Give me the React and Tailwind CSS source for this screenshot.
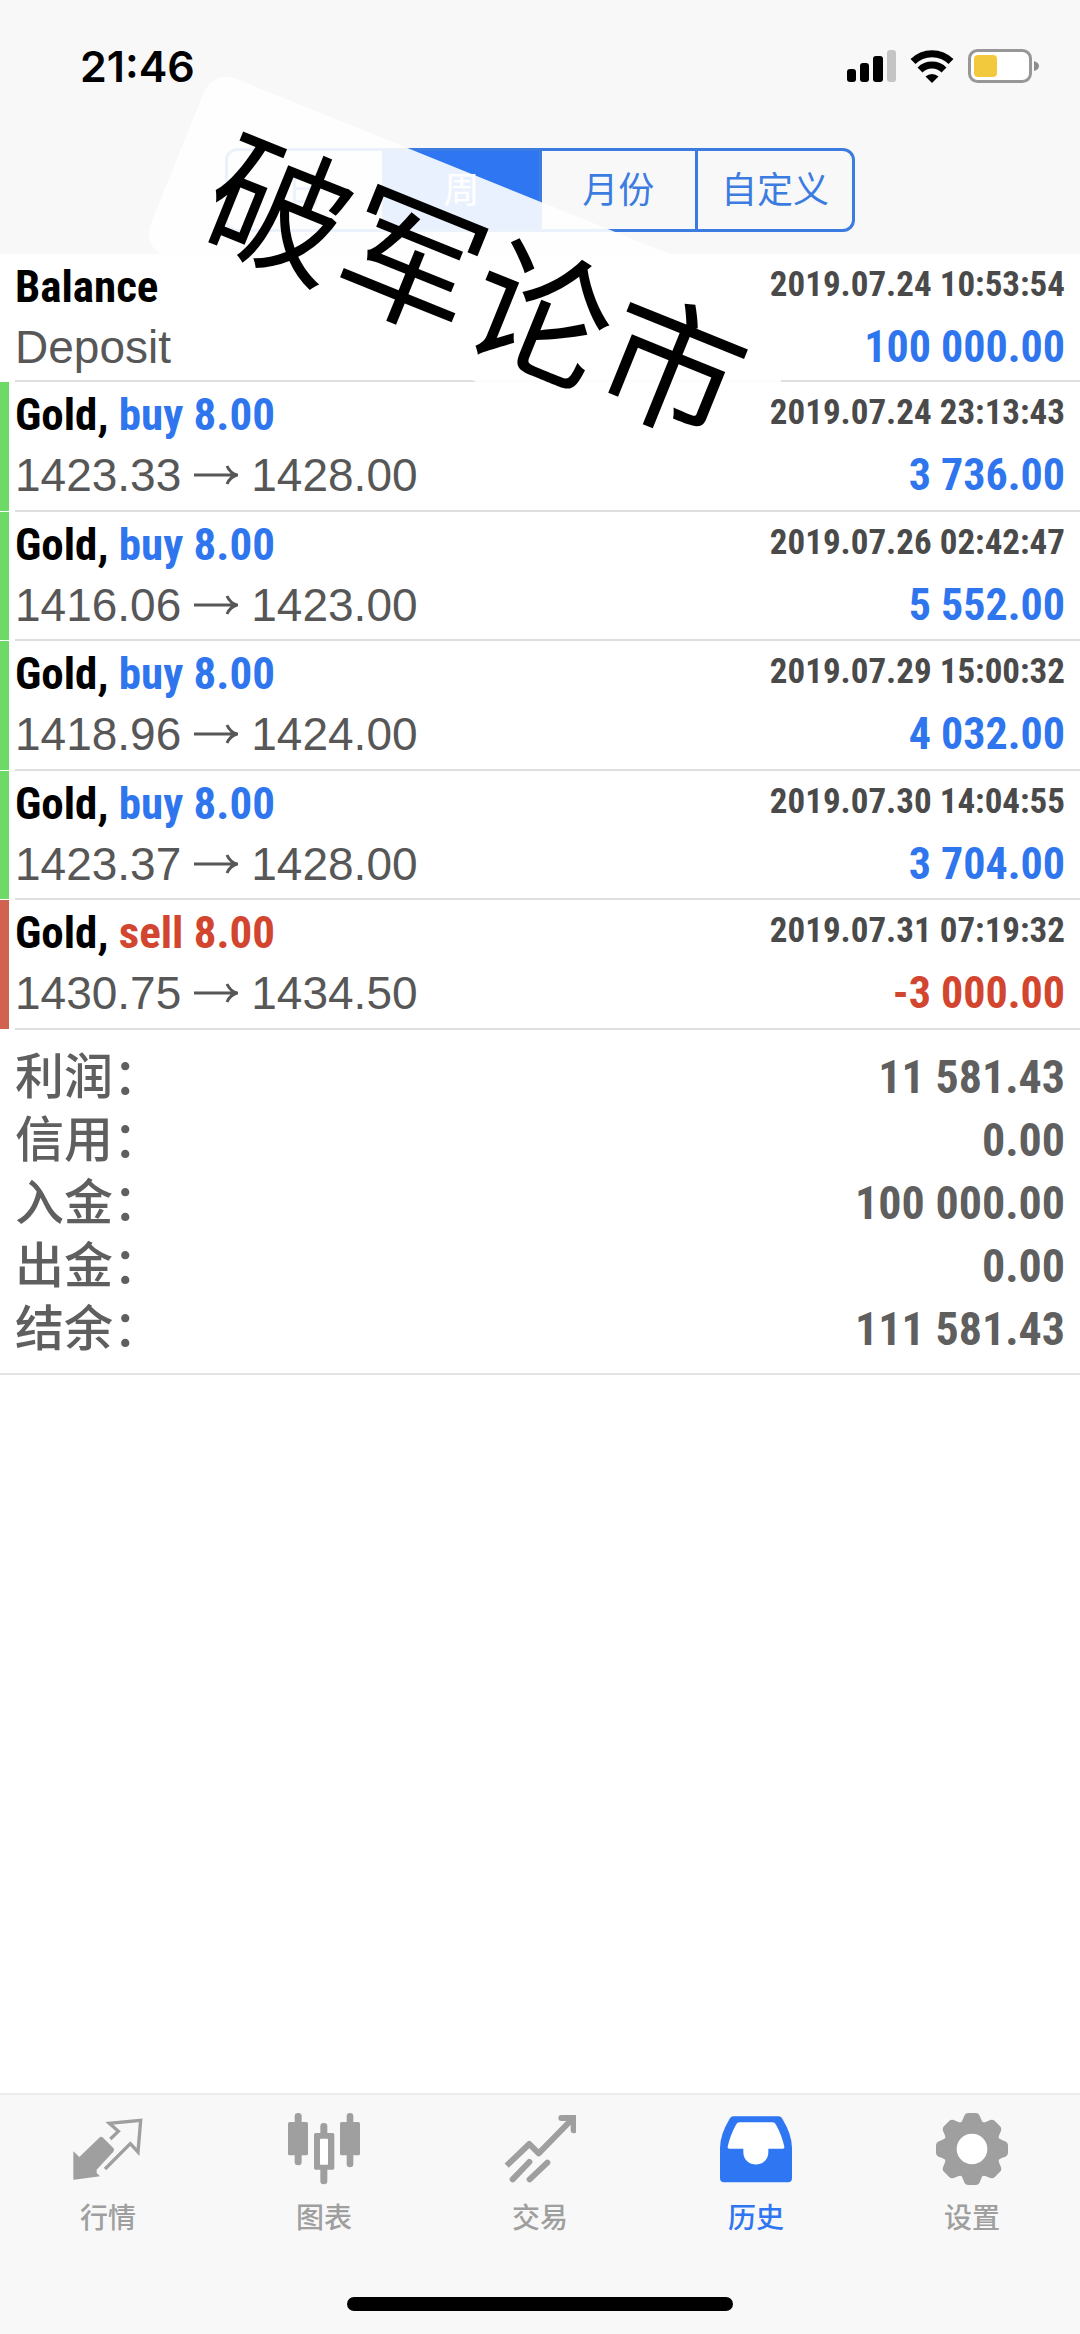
import React, { useState } from 'react';
import clsx from 'clsx';

const PERIODS = ['日', '周', '月份', '自定义'];

const DEALS = [
  { id: 1, side: 'buy', volume: '8.00', open: '1423.33', close: '1428.00', time: '2019.07.24 23:13:43', profit: '3 736.00' },
  { id: 2, side: 'buy', volume: '8.00', open: '1416.06', close: '1423.00', time: '2019.07.26 02:42:47', profit: '5 552.00' },
  { id: 3, side: 'buy', volume: '8.00', open: '1418.96', close: '1424.00', time: '2019.07.29 15:00:32', profit: '4 032.00' },
  { id: 4, side: 'buy', volume: '8.00', open: '1423.37', close: '1428.00', time: '2019.07.30 14:04:55', profit: '3 704.00' },
  { id: 5, side: 'sell', volume: '8.00', open: '1430.75', close: '1434.50', time: '2019.07.31 07:19:32', profit: '-3 000.00' },
];

const SUMMARY = [
  { label: '利润：', value: '11 581.43' },
  { label: '信用：', value: '0.00' },
  { label: '入金：', value: '100 000.00' },
  { label: '出金：', value: '0.00' },
  { label: '结余：', value: '111 581.43' },
];

const NARROW = "font-['Roboto_Condensed','Liberation_Sans_Narrow',sans-serif] font-bold";

function SignalIcon() {
  return (
    <svg width="49" height="32" viewBox="0 0 49 32" aria-hidden="true">
      <rect x="0" y="19" width="9" height="13" rx="3" />
      <rect x="13" y="13" width="9" height="19" rx="3" />
      <rect x="26" y="6" width="10" height="26" rx="3" />
      <rect x="40" y="0" width="9" height="32" rx="3" fill="#c4c4c4" />
    </svg>
  );
}

function WifiIcon() {
  return (
    <svg width="44" height="33" viewBox="0 0 44 33" aria-hidden="true">
      <path d="M3 11.500a27 27 0 0 1 38 0" fill="none" stroke="#000" strokeWidth="7" />
      <path d="M10 20a17 17 0 0 1 24 0" fill="none" stroke="#000" strokeWidth="7" />
      <path d="M15.500 26.500a9.500 9.500 0 0 1 13 0L22 33z" />
    </svg>
  );
}

function BatteryIcon() {
  return (
    <svg width="72" height="34" viewBox="0 0 72 34" aria-hidden="true">
      <rect x="1.500" y="1.500" width="61" height="31" rx="8" fill="#fff" stroke="#979797" strokeWidth="3" />
      <rect x="6" y="6" width="23" height="22" rx="4" fill="#f2c93d" />
      <path d="M66 12q5 1.500 5 5t-5 5z" fill="#8d8d8d" />
    </svg>
  );
}

function QuotesIcon() {
  return (
    <svg className="size-[72px]" viewBox="0 0 216 216" aria-hidden="true">
      <path
        d="M4 115 22 132 82 74q5-5 11 0l31 31q5 6 0 11L74 170v10l10 10L6 200q-2 0-2-3z"
        fill="currentColor"
      />
      <path d="M115 78 139 55 112 31 206 22 198 117 175 92 99 168" fill="none" stroke="currentColor" strokeWidth="10" />
    </svg>
  );
}

function ChartIcon() {
  return (
    <svg className="size-[72px]" viewBox="0 0 216 216" fill="currentColor" aria-hidden="true">
      <rect x="20" y="0" width="21" height="157" rx="10" />
      <rect x="0" y="27" width="60" height="100" rx="5" />
      <rect x="97" y="30" width="21" height="184" rx="10" />
      <rect x="78" y="60" width="61" height="110" rx="5" />
      <rect x="96" y="77" width="24" height="78" rx="2" fill="#fff" />
      <rect x="176" y="0" width="20" height="163" rx="10" />
      <rect x="156" y="27" width="60" height="100" rx="5" />
    </svg>
  );
}

function TradeIcon() {
  return (
    <svg
      className="size-[72px]"
      viewBox="0 0 216 216"
      fill="none"
      stroke="currentColor"
      strokeWidth="18"
      strokeLinecap="round"
      aria-hidden="true"
    >
      <path d="M8 158 76 93l28 28L205 18" strokeLinecap="butt" strokeLinejoin="round" />
      <path d="M172 15h37v37" />
      <path d="M26 199 76 147M77 199l53-50" />
    </svg>
  );
}

function HistoryIcon() {
  return (
    <svg className="size-[72px]" viewBox="0 0 216 216" aria-hidden="true">
      <path
        d="M40 10H176q7 0 11 7 29 48 29 88v91q0 12-12 12H12q-12 0-12-12v-91Q0 65 29 17q4-7 11-7z"
        fill="currentColor"
      />
      <path
        d="M59 28h98q8 0 11 7 17 30 25 66 1 6-5 6h-43v10c0 50-75 50-75 0v-10H28q-6 0-5-6 8-36 25-66 3-7 11-7z"
        fill="#fff"
      />
    </svg>
  );
}

function SettingsIcon() {
  return (
    <svg className="size-[72px]" viewBox="-108 -108 216 216" fill="currentColor" aria-hidden="true">
      <circle r="86" />
      {[0, 45, 90, 135, 180, 225, 270, 315].map((angle) => (
        <path key={angle} d="M-36-76Q-28-84-25-95-21-108-11-108H11Q21-108 25-95 28-84 36-76z" transform={`rotate(${angle})`} />
      ))}
      <circle r="46" fill="#fff" />
    </svg>
  );
}

const TABS = [
  { label: '行情', Icon: QuotesIcon },
  { label: '图表', Icon: ChartIcon },
  { label: '交易', Icon: TradeIcon },
  { label: '历史', Icon: HistoryIcon },
  { label: '设置', Icon: SettingsIcon },
];

function Arrow() {
  return (
    <svg className="mx-[13px]" width="44" height="20" viewBox="0 0 44 20" fill="none" stroke="currentColor" strokeWidth="3" role="img" aria-label="to">
      <path d="M0 10h42M33 1q3 7 10 9-7 2-10 9" />
    </svg>
  );
}

function HistoryRow({ bar, title, detail, time, amount, negative, className }) {
  return (
    <li className={clsx('flex', className)}>
      <div className={clsx('w-[9px] mr-[6px] border-b border-white', bar)} />
      <div className="flex flex-1 justify-between border-b-2 border-[#dedede] pt-[3px] pr-[15px]">
        <div>
          <h2 className={clsx(NARROW, 'text-[45px] leading-[60px] text-black')}>{title}</h2>
          <p className="flex items-center text-[46px] leading-[60px] text-[#575757]">{detail}</p>
        </div>
        <div className={clsx(NARROW, 'text-right')}>
          <p className="h-[60px] text-[35px] leading-[56px] text-[#4a4a4a]">{time}</p>
          <p className={clsx('text-[44px] leading-[60px]', negative ? 'text-[#d2452f]' : 'text-[#2f76ee]')}>{amount}</p>
        </div>
      </div>
    </li>
  );
}

export default function App() {
  const [period, setPeriod] = useState('周');
  const [tab, setTab] = useState('历史');

  return (
    <div className="relative flex min-h-screen flex-col overflow-hidden bg-white font-['Liberation_Sans','Noto_Sans_CJK_SC',sans-serif]">
      <header className="h-[254px] bg-[#f8f8f8]">
        <div className="flex h-[148px] items-start justify-between pt-[49px] pl-20 pr-10">
          <time className="font-['Inter',sans-serif] text-[43px] leading-[34px] font-semibold text-black">21:46</time>
          <div className="flex items-center gap-[14px]">
            <SignalIcon />
            <WifiIcon />
            <BatteryIcon />
          </div>
        </div>
        <div className="mx-auto flex h-[84px] w-[630px] overflow-hidden rounded-xl border-3 border-[#3c7ce0]">
          {PERIODS.map((name) => (
            <button
              key={name}
              type="button"
              aria-pressed={period === name}
              onClick={() => setPeriod(name)}
              className={clsx(
                'flex-1 border-r-3 border-[#3c7ce0] pt-[2px] text-[36px] last:border-r-0',
                period === name ? 'bg-[#2f76f2] text-white' : 'text-[#3c7ce0]'
              )}
            >
              {name}
            </button>
          ))}
        </div>
      </header>

      <main className="flex-1">
        <ul>
          <HistoryRow
            className="h-[128px]"
            title="Balance"
            detail="Deposit"
            time="2019.07.24 10:53:54"
            amount="100 000.00"
          />
          {DEALS.map((deal) => (
            <HistoryRow
              key={deal.id}
              className="h-[129px] even:h-[130px]"
              bar={deal.side === 'sell' ? 'bg-[#d0624f]' : 'bg-[#6fd968]'}
              title={
                <>
                  Gold,{' '}
                  <span className={deal.side === 'sell' ? 'text-[#d2452f]' : 'text-[#2f76ee]'}>
                    {deal.side} {deal.volume}
                  </span>
                </>
              }
              detail={
                <>
                  {deal.open}
                  <Arrow />
                  {deal.close}
                </>
              }
              time={deal.time}
              amount={deal.profit}
              negative={deal.side === 'sell'}
            />
          ))}
        </ul>

        <dl className="border-b-2 border-[#e4e4e4] py-[14px] px-[15px] text-[#5f5f5f]">
          {SUMMARY.map((item) => (
            <div key={item.label} className="flex h-[63px] justify-between">
              <dt className="font-['Noto_Sans_CJK_SC',sans-serif] text-[49px] leading-[58px] font-medium">{item.label}</dt>
              <dd className={clsx(NARROW, 'text-[46px] leading-[66px]')}>{item.value}</dd>
            </div>
          ))}
        </dl>
      </main>

      <nav className="flex h-[241px] flex-col justify-between border-t-2 border-[#ededed] bg-[#f8f8f8] pt-[18px] pb-[23px]">
        <div className="flex">
          {TABS.map(({ label, Icon }) => (
            <button
              key={label}
              type="button"
              aria-current={tab === label ? 'page' : undefined}
              onClick={() => setTab(label)}
              className={clsx(
                'flex flex-1 flex-col items-center gap-[14px] text-[28px] leading-10 font-medium',
                tab === label ? 'text-[#2f76f2]' : 'text-[#9f9f9f]'
              )}
            >
              <Icon />
              {label}
            </button>
          ))}
        </div>
        <div className="mx-auto h-[14px] w-[386px] rounded-full bg-black" />
      </nav>

      {/* stamp laid over the header and the first rows */}
      <div className="pointer-events-none absolute left-[154px] top-[183px] flex h-[191px] w-[643px] rotate-22 items-center justify-center rounded-3xl bg-white/90 pl-2 font-['Noto_Sans_CJK_SC',sans-serif] text-[141px] leading-none text-black">
        破军论市
      </div>
    </div>
  );
}
